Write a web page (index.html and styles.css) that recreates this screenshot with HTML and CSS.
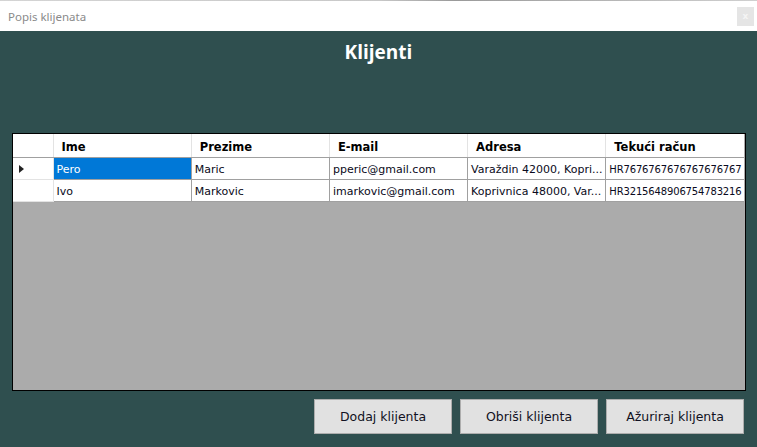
FILE: index.html
```html
<!DOCTYPE html>
<html>
<head>
<meta charset="utf-8">
<link rel="stylesheet" href="styles.css">
</head>
<body>
<div class="topstrip"></div>
<div class="titlebar">
  <span class="wtitle">Popis klijenata</span>
  <span class="close">x</span>
</div>
<div class="main">
  <h1 class="heading">Klijenti</h1>
  <div class="grid">
    <table class="dgv">
      <colgroup>
        <col class="c-rh"><col class="c"><col class="c"><col class="c"><col class="c"><col class="c">
      </colgroup>
      <thead>
        <tr>
          <th class="rh"></th>
          <th>Ime</th>
          <th>Prezime</th>
          <th>E-mail</th>
          <th>Adresa</th>
          <th>Tekući račun</th>
        </tr>
      </thead>
      <tbody>
        <tr>
          <td class="rh"><span class="arrow"></span></td>
          <td class="sel">Pero</td>
          <td>Maric</td>
          <td>pperic@gmail.com</td>
          <td>Varaždin 42000, Kopri...</td>
          <td class="iban">HR7676767676767676767</td>
        </tr>
        <tr>
          <td class="rh"></td>
          <td>Ivo</td>
          <td>Markovic</td>
          <td>imarkovic@gmail.com</td>
          <td>Koprivnica 48000, Var...</td>
          <td class="iban">HR3215648906754783216</td>
        </tr>
      </tbody>
    </table>
  </div>
  <div class="buttons">
    <button class="btn">Dodaj klijenta</button>
    <button class="btn">Obriši klijenta</button>
    <button class="btn">Ažuriraj klijenta</button>
  </div>
</div>
</body>
</html>
```

FILE: styles.css
```css
html, body {
  margin: 0;
  padding: 0;
  width: 757px;
  height: 447px;
  overflow: hidden;
  background: #2f4f4f;
}
.topstrip {
  height: 1px;
  background: linear-gradient(90deg, #d4d4d4, #c8c8c8 50%, #9a9a9a 60%, #d0d0d0);
}
.titlebar {
  height: 30px;
  background: #ffffff;
  display: flex;
  align-items: center;
  justify-content: space-between;
  padding: 0 3px 0 8px;
}
.wtitle {
  font-family: "Noto Sans", sans-serif;
  font-size: 11.5px;
  color: #8a8a8a;
}
.close {
  width: 17px;
  height: 19px;
  background: #e5e5e5;
  color: #f4f4f4;
  font-family: "DejaVu Sans", sans-serif;
  font-size: 9px;
  font-weight: bold;
  display: flex;
  align-items: center;
  justify-content: center;
}
.main {
  height: 416px;
  background: #2f4f4f;
  display: flex;
  flex-direction: column;
}
.heading {
  margin: 10px 0 0 0;
  height: 22px;
  line-height: 22px;
  text-align: center;
  font-family: "Open Sans", sans-serif;
  font-weight: bold;
  font-size: 19px;
  color: #ffffff;
}
.grid {
  margin: 70px 0 0 12px;
  width: 732px;
  height: 256px;
  border: 1px solid #000000;
  background: #ababab;
}
.dgv {
  border-collapse: collapse;
  table-layout: fixed;
  width: 731px;
  font-family: "DejaVu Sans", sans-serif;
  font-size: 11px;
}
.c-rh { width: 40px; }
.c { width: 138px; }
.dgv th {
  height: 21px;
  padding: 2px 0 0 8px;
  background: #ffffff;
  text-align: left;
  font-weight: bold;
  font-size: 11.5px;
  color: #000000;
  border-left: 1px solid #e3e3e3;
  border-bottom: 1px solid #a0a0a0;
  white-space: nowrap;
  overflow: hidden;
}
.dgv th.rh { border-left: none; }
.dgv td {
  height: 20px;
  padding: 1px 0 0 3px;
  background: #ffffff;
  color: #0a0a20;
  border-left: 1px solid #a0a0a0;
  border-bottom: 1px solid #a0a0a0;
  white-space: nowrap;
  overflow: hidden;
}
.dgv td.iban {
  font-size: 10px;
  letter-spacing: -0.15px;
}
.dgv td.rh {
  border-left: none;
  border-bottom: 1px solid #e3e3e3;
  border-right: 1px solid #e3e3e3;
  padding: 0 0 0 6px;
}
.dgv td.sel {
  background: #0078d7;
  color: #ffffff;
}
.arrow {
  display: block;
  width: 0;
  height: 0;
  border-top: 4px solid transparent;
  border-bottom: 4px solid transparent;
  border-left: 5px solid #222222;
}
.buttons {
  margin: 8px 0 0 0;
  padding-right: 13px;
  display: flex;
  justify-content: flex-end;
  gap: 8px;
}
.btn {
  width: 138px;
  height: 35px;
  margin: 0;
  background: #e1e1e1;
  border: 1px solid #adadad;
  font-family: "DejaVu Sans", sans-serif;
  font-size: 12.5px;
  color: #111122;
  padding: 0;
}
```
